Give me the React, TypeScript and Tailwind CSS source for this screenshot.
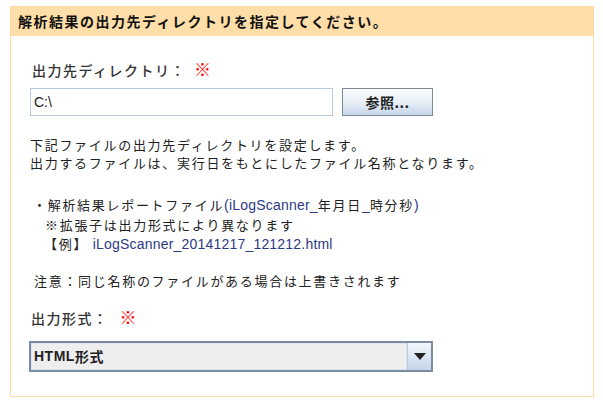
const jp = { fontFamily: '"Noto Sans CJK JP", "Liberation Sans", sans-serif' };

function Latin({ children }: { children: React.ReactNode }) {
  return (
    <span className="text-[14px] tracking-[0.2px] text-[#2d3a86] [font-family:'Liberation_Sans',sans-serif]">
      {children}
    </span>
  );
}

function Required() {
  return <span className="text-[17px] font-bold leading-none text-[#ff0000]">※</span>;
}

export default function App() {
  return (
    <div className="min-h-[404px] w-[603px] bg-white pl-[10px] pt-[6px]" style={jp}>
      <div className="h-[391px] w-[584px] border border-t-0 border-[#fddba3]">
        <div className="flex h-[30px] items-center bg-[#ffdea9] pl-[7px] text-[14px] font-bold tracking-[1.5px] text-[#111]">
          解析結果の出力先ディレクトリを指定してください。
        </div>

        <div className="pl-[19px] text-[13px] tracking-[1.7px] text-[#222]">
          <div className="mt-[24px] flex h-[20px] items-center">
            <span className="ml-[2px] text-[14px] font-medium tracking-[1.5px] text-[#333]">出力先ディレクトリ：</span>
            <span className="ml-[8px]">
              <Required />
            </span>
          </div>

          <div className="mt-[8px] flex items-center gap-[9px]">
            <div className="flex h-[28px] w-[303px] items-center border border-[#b9cadf] bg-white pl-[3px] text-[14px] tracking-normal text-[#222] [font-family:'Liberation_Sans',sans-serif]">
              C:\
            </div>
            <button className="flex h-[28px] w-[91px] items-center justify-center border border-[#7b8898] bg-gradient-to-b from-[#fbfdff] via-[#e9f0f8] to-[#c6d6ea] text-[14px] font-bold tracking-[0.5px] text-[#222]">
              参照...
            </button>
          </div>

          <div className="mt-[20px] leading-[18px]">
            <div>下記ファイルの出力先ディレクトリを設定します。</div>
            <div>出力するファイルは、実行日をもとにしたファイル名称となります。</div>
          </div>

          <div className="mt-[23px] pl-[3px] leading-[19px]">
            <div>
              ・解析結果レポートファイル<Latin>(iLogScanner_</Latin>年月日<Latin>_</Latin>時分秒<Latin>)</Latin>
            </div>
            <div className="pl-[12px]">※拡張子は出力形式により異なります</div>
            <div className="pl-[11px]">
              【例】 <Latin>iLogScanner_20141217_121212.html</Latin>
            </div>
          </div>

          <div className="mt-[17px] pl-[4px] leading-[20px]">注意：同じ名称のファイルがある場合は上書きされます</div>

          <div className="mt-[17px] flex h-[20px] items-center">
            <span className="ml-[1px] text-[14px] font-medium tracking-[1.5px] text-[#333]">出力形式：</span>
            <span className="ml-[11px]">
              <Required />
            </span>
          </div>

          <div className="-ml-[1px] mt-[13px] flex h-[31px] w-[404px] border-2 border-[#7b8ca0]">
            <div className="flex flex-1 items-center border border-[#dce5ef] bg-[#eeeeee] pl-[2px] text-[14px] font-bold tracking-[0.5px] text-[#222]">
              <span className="[font-family:'Liberation_Sans',sans-serif]">HTML</span>形式
            </div>
            <div className="flex w-[24px] items-center justify-center border-l border-[#b8c8dc] bg-gradient-to-b from-[#f3f7fc] to-[#c4d5e9]">
              <svg width="12" height="7" viewBox="0 0 12 7">
                <path d="M0 0 L12 0 L6 7 Z" fill="#222" />
              </svg>
            </div>
          </div>
        </div>
      </div>
    </div>
  );
}
